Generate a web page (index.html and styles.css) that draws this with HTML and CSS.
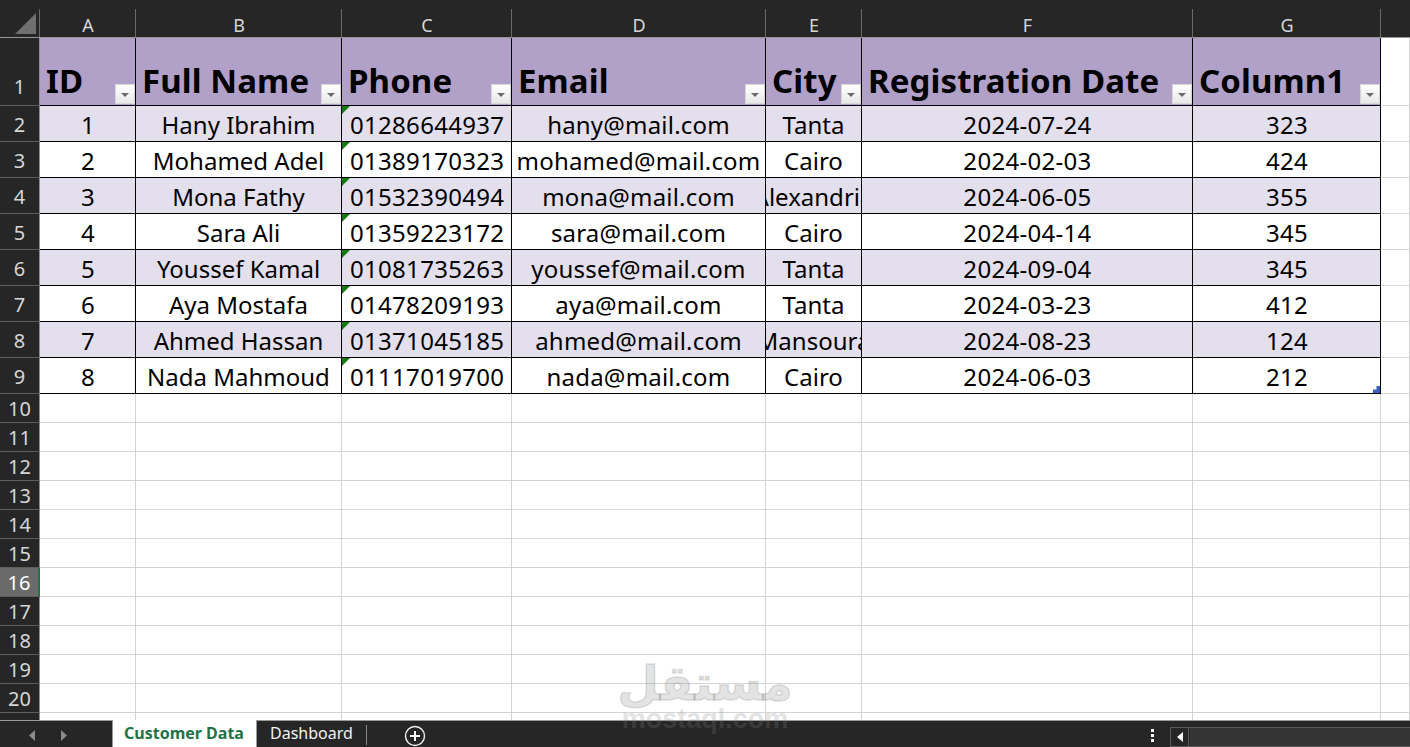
FILE: index.html
```html
<!DOCTYPE html>
<html lang="en">
<head>
<meta charset="utf-8">
<title>Customer Data</title>
<link rel="stylesheet" href="styles.css">
</head>
<body>
<div class="app">
  <div class="sheet">
    <div class="ch corner"><svg class="corner-tri" width="21" height="21" viewBox="0 0 21 21"><path d="M21 0V21H0Z" fill="#6f6f6f"/></svg></div>
    <div class="ch">A</div><div class="ch">B</div><div class="ch">C</div><div class="ch">D</div><div class="ch">E</div><div class="ch">F</div><div class="ch">G</div><div class="ch end"></div>

    <div class="rh rh-top">1</div>
    <div class="th">ID<i class="fb"></i></div>
    <div class="th">Full Name<i class="fb"></i></div>
    <div class="th">Phone<i class="fb"></i></div>
    <div class="th">Email<i class="fb"></i></div>
    <div class="th">City<i class="fb"></i></div>
    <div class="th">Registration Date<i class="fb"></i></div>
    <div class="th">Column1<i class="fb"></i></div>
    <div class="e"></div>

    <div class="rh">2</div><div class="c band num">1</div><div class="c band">Hany Ibrahim</div><div class="c band num tel">01286644937</div><div class="c band mail">hany@mail.com</div><div class="c band">Tanta</div><div class="c band num">2024-07-24</div><div class="c band num">323</div><div class="e"></div>
    <div class="rh">3</div><div class="c num">2</div><div class="c">Mohamed Adel</div><div class="c num tel">01389170323</div><div class="c mail">mohamed@mail.com</div><div class="c">Cairo</div><div class="c num">2024-02-03</div><div class="c num">424</div><div class="e"></div>
    <div class="rh">4</div><div class="c band num">3</div><div class="c band">Mona Fathy</div><div class="c band num tel">01532390494</div><div class="c band mail">mona@mail.com</div><div class="c band"><span>Alexandria</span></div><div class="c band num">2024-06-05</div><div class="c band num">355</div><div class="e"></div>
    <div class="rh">5</div><div class="c num">4</div><div class="c">Sara Ali</div><div class="c num tel">01359223172</div><div class="c mail">sara@mail.com</div><div class="c">Cairo</div><div class="c num">2024-04-14</div><div class="c num">345</div><div class="e"></div>
    <div class="rh">6</div><div class="c band num">5</div><div class="c band">Youssef Kamal</div><div class="c band num tel">01081735263</div><div class="c band mail">youssef@mail.com</div><div class="c band">Tanta</div><div class="c band num">2024-09-04</div><div class="c band num">345</div><div class="e"></div>
    <div class="rh">7</div><div class="c num">6</div><div class="c">Aya Mostafa</div><div class="c num tel">01478209193</div><div class="c mail">aya@mail.com</div><div class="c">Tanta</div><div class="c num">2024-03-23</div><div class="c num">412</div><div class="e"></div>
    <div class="rh">8</div><div class="c band num">7</div><div class="c band">Ahmed Hassan</div><div class="c band num tel">01371045185</div><div class="c band mail">ahmed@mail.com</div><div class="c band"><span>Mansoura</span></div><div class="c band num">2024-08-23</div><div class="c band num">124</div><div class="e"></div>
    <div class="rh">9</div><div class="c num">8</div><div class="c">Nada Mahmoud</div><div class="c num tel">01117019700</div><div class="c mail">nada@mail.com</div><div class="c">Cairo</div><div class="c num">2024-06-03</div><div class="c num">212<i class="grip"></i></div><div class="e"></div>

    <div class="rh small">10</div><div class="e"></div><div class="e"></div><div class="e"></div><div class="e"></div><div class="e"></div><div class="e"></div><div class="e"></div><div class="e"></div>
    <div class="rh small">11</div><div class="e"></div><div class="e"></div><div class="e"></div><div class="e"></div><div class="e"></div><div class="e"></div><div class="e"></div><div class="e"></div>
    <div class="rh small">12</div><div class="e"></div><div class="e"></div><div class="e"></div><div class="e"></div><div class="e"></div><div class="e"></div><div class="e"></div><div class="e"></div>
    <div class="rh small">13</div><div class="e"></div><div class="e"></div><div class="e"></div><div class="e"></div><div class="e"></div><div class="e"></div><div class="e"></div><div class="e"></div>
    <div class="rh small">14</div><div class="e"></div><div class="e"></div><div class="e"></div><div class="e"></div><div class="e"></div><div class="e"></div><div class="e"></div><div class="e"></div>
    <div class="rh small">15</div><div class="e"></div><div class="e"></div><div class="e"></div><div class="e"></div><div class="e"></div><div class="e"></div><div class="e"></div><div class="e"></div>
    <div class="rh small sel">16</div><div class="e"></div><div class="e"></div><div class="e"></div><div class="e"></div><div class="e"></div><div class="e"></div><div class="e"></div><div class="e"></div>
    <div class="rh small">17</div><div class="e"></div><div class="e"></div><div class="e"></div><div class="e"></div><div class="e"></div><div class="e"></div><div class="e"></div><div class="e"></div>
    <div class="rh small">18</div><div class="e"></div><div class="e"></div><div class="e"></div><div class="e"></div><div class="e"></div><div class="e"></div><div class="e"></div><div class="e"></div>
    <div class="rh small">19</div><div class="e"></div><div class="e"></div><div class="e"></div><div class="e"></div><div class="e"></div><div class="e"></div><div class="e"></div><div class="e"></div>
    <div class="rh small">20</div><div class="e"></div><div class="e"></div><div class="e"></div><div class="e"></div><div class="e"></div><div class="e"></div><div class="e"></div><div class="e"></div>
    <div class="rh small"></div><div class="e"></div><div class="e"></div><div class="e"></div><div class="e"></div><div class="e"></div><div class="e"></div><div class="e"></div><div class="e"></div>
  </div>

  <div class="tabbar">
    <div class="nav">
      <svg width="8" height="11" viewBox="0 0 8 11"><path d="M7 0V11L1 5.5Z" fill="#8a8a8a"/></svg>
      <svg width="8" height="11" viewBox="0 0 8 11"><path d="M1 0V11L7 5.5Z" fill="#8a8a8a"/></svg>
    </div>
    <div class="tab active">Customer Data</div>
    <div class="tab">Dashboard</div>
    <div class="add"><svg width="22" height="22" viewBox="0 0 22 22"><circle cx="11" cy="11" r="9.5" fill="none" stroke="#f0f0f0" stroke-width="1.4"/><path d="M11 6V16M6 11H16" stroke="#fff" stroke-width="2"/></svg></div>
    <div class="spacer"></div>
    <div class="dots"><b></b><b></b><b></b></div>
    <div class="hscroll"><div class="hbtn"><svg width="6" height="10" viewBox="0 0 6 10"><path d="M6 0V10L0 5Z" fill="#fff"/></svg></div><div class="htrack"></div></div>
  </div>

  <div class="mark"><div class="mark-ar" lang="ar" dir="rtl">مستقل</div><div class="mark-en">mostaql.com</div></div>
</div>
</body>
</html>
```
FILE: styles.css
```css
* { box-sizing: border-box; }
html, body { margin: 0; padding: 0; }
body { background: #262626; font-family: "Noto Sans", "Open Sans", sans-serif; }
.app { position: relative; width: 1410px; height: 747px; overflow: hidden; display: flex; flex-direction: column; }

.sheet {
  height: 720px; overflow: hidden; background: #fff; flex: none;
  display: grid;
  grid-template-columns: 40px 96px 206px 170px 254px 96px 331px 188px 29px;
  grid-template-rows: 38px 68px repeat(8, 36px) repeat(12, 29px);
}

.ch {
  background: #262626 linear-gradient(#6a6a6a, #6a6a6a) right 9px / 1px 28px no-repeat;
  border-bottom: 1px solid #979797;
  color: #d6d6d6; font-size: 18px; line-height: 1;
  display: flex; align-items: flex-end; justify-content: center; padding-bottom: 3px;
}
.corner { position: relative; }
.corner-tri { position: absolute; left: 15px; top: 13px; }
.end { background-image: none; }

.rh {
  background: #262626; color: #d6d6d6; font-size: 20px; line-height: 1;
  border-right: 1px solid #8c8c8c; border-bottom: 1px solid #5e5e5e;
  display: flex; align-items: center; justify-content: center; padding-top: 3px;
}
.rh-top { align-items: flex-end; padding: 0 0 8px; }
.rh.small { padding-top: 2px; padding-bottom: 0; }
.sel { background: #6a6a6a; color: #fff; border-right: 2px solid #217346; }

.th {
  position: relative; background: #b1a0c7; color: #000;
  border-right: 1px solid #000; border-bottom: 1px solid #000;
  font-size: 33px; font-weight: 700; line-height: 1; white-space: nowrap; letter-spacing: .1px;
  display: flex; align-items: flex-end; padding: 0 0 8px 6px;
}
.fb {
  position: absolute; right: 0; bottom: 1px; width: 20px; height: 20px;
  background: linear-gradient(#fff, #e8e8e8); border: 1px solid #d8d8d8;
}
.fb::after {
  content: ""; position: absolute; left: 5px; top: 8px;
  border-left: 4px solid transparent; border-right: 4px solid transparent; border-top: 4px solid #6b6b6b;
}

.c {
  position: relative; background: #fff; color: #000; overflow: hidden;
  border-right: 1px solid #000; border-bottom: 1px solid #000;
  font-size: 24px; line-height: 1; white-space: nowrap;
  display: flex; align-items: flex-end; justify-content: center; padding-bottom: 4px;
}
.c > span { flex: none; }
.band { background: #e4dfec; }
.num { letter-spacing: .3px; padding-left: 1px; }
.mail { letter-spacing: .2px; }
.tel { justify-content: flex-start; padding-left: 8px; }
.tel::before {
  content: ""; position: absolute; left: 0; top: 0;
  border-top: 8px solid #107c10; border-right: 8px solid transparent;
}
.grip { position: absolute; right: 0; bottom: 0; width: 7px; height: 7px; background: #3a5fb8; clip-path: polygon(100% 0, 100% 100%, 0 100%, 0 50%, 50% 50%, 50% 0); }

.e { border-right: 1px solid #d4d4d4; border-bottom: 1px solid #d4d4d4; }

.tabbar {
  flex: 1; display: flex; align-items: stretch; background: #262626;
  border-top: 1px solid #9a9a9a; color: #fff; font-size: 16px;
}
.nav { width: 113px; display: flex; align-items: center; gap: 24px; padding: 3px 0 0 28px; border-right: 1px solid #9a9a9a; }
.tab { display: flex; align-items: center; padding: 0 14px 2px 13px; white-space: nowrap; color: #f2f2f2; position: relative; }
.tab.active { background: #fff; color: #217346; font-weight: 700; width: 143px; padding: 0 0 2px 11px; margin-top: -1px; height: 27px; }
.tab:not(.active) { border-left: 1px solid #9a9a9a; }
.tab:not(.active)::after { content: ""; position: absolute; right: 0; top: 4px; height: 20px; width: 1px; background: #8a8a8a; }
.add { display: flex; align-items: center; margin-left: 37px; padding-top: 3px; }
.spacer { flex: 1; }
.dots { display: flex; flex-direction: column; gap: 2px; justify-content: center; margin-right: 16px; padding-top: 2px; }
.dots b { display: block; width: 3px; height: 3px; background: #fff; }
.hscroll { width: 240px; display: flex; margin: 6px 0 0; height: 20px; border: 1px solid #5a5a5a; border-right: 0; }
.hbtn { width: 18px; display: flex; align-items: center; justify-content: center; border-right: 1px solid #5a5a5a; }
.htrack { flex: 1; background: #343434; margin-left: 1px; }

.mark { position: absolute; left: 600px; top: 659px; width: 210px; text-align: center; pointer-events: none; color: rgba(130,130,130,.24); }
.mark-ar { font-family: "DejaVu Sans", sans-serif; font-weight: 700; font-size: 48px; line-height: 48px; -webkit-text-stroke: 1.5px rgba(130,130,130,.24); }
.mark-en { font-family: "Liberation Sans", sans-serif; font-weight: 700; font-size: 27px; line-height: 24px; }
```
